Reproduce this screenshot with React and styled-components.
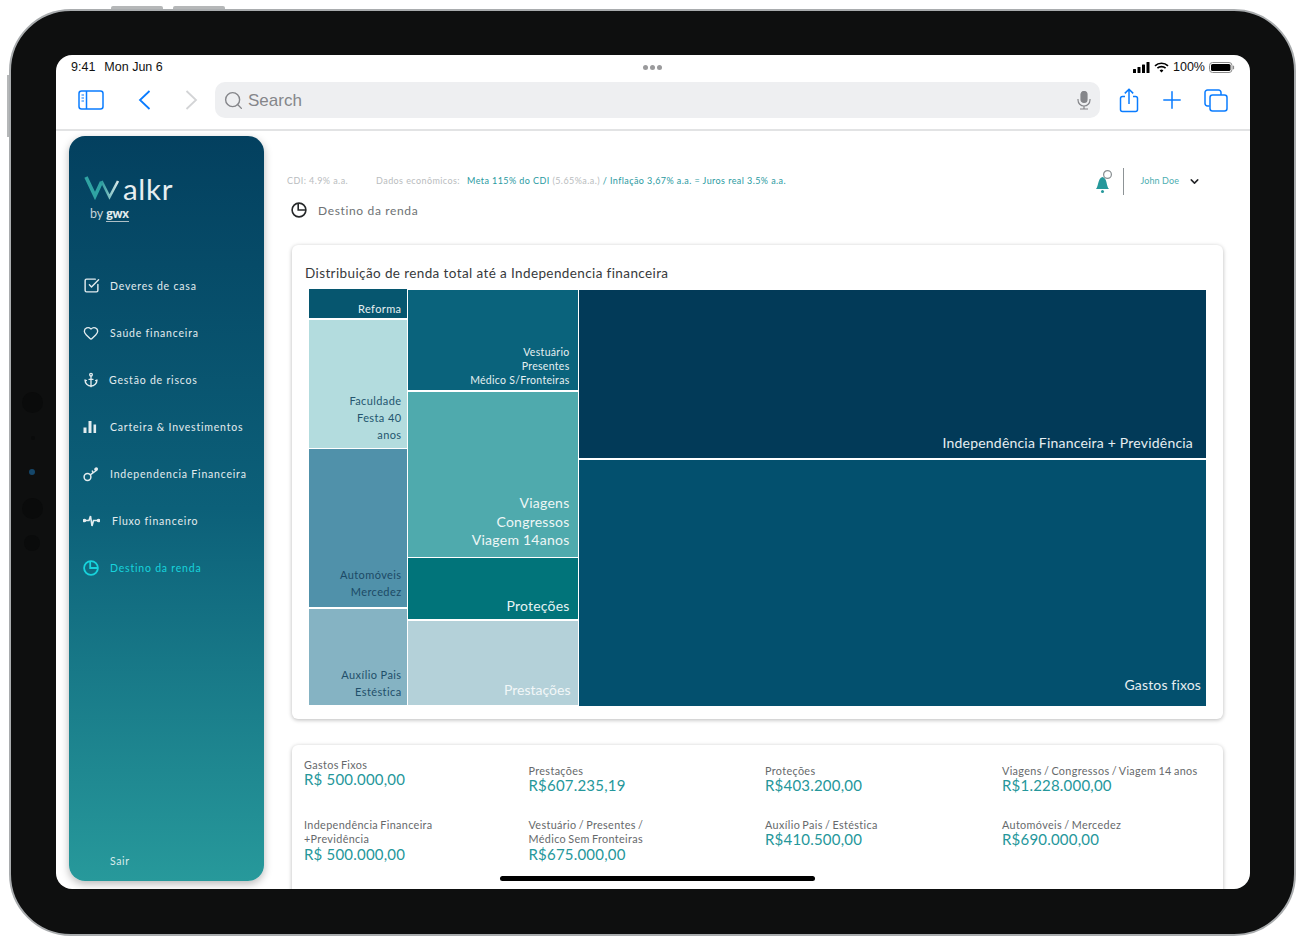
import React from "react";
import styled, { createGlobalStyle } from "styled-components";
import { Heart, Anchor, SquareCheckBig, ChevronDown, Search, Plus } from "lucide-react";

const Global = createGlobalStyle`
  html, body { margin: 0; padding: 0; background: #fff; }
  body { width: 1306px; height: 945px; overflow: hidden; font-family: Lato, "Open Sans", sans-serif; }
`;

const Device = styled.div`
  position: relative;
  box-sizing: border-box;
  width: 1287px;
  height: 927px;
  margin: 9px 0 0 9px;
  padding: 44px 44px 45px 45px;
  background: #0e0f0f;
  border-radius: 62px;
  border: 2px solid #a9acae;
`;

const SideKey = styled.span`
  position: absolute;
  top: -5px;
  left: ${(p) => p.$left}px;
  width: 52px;
  height: 3px;
  background: #b5b7b8;
  border-radius: 2px 2px 0 0;
`;

const VolumeKey = styled.span`
  position: absolute;
  left: -4px;
  top: 64px;
  width: 2px;
  height: 62px;
  background: #b5b7b8;
`;

const Lens = styled.span`
  position: absolute;
  left: ${(p) => p.$left}px;
  top: ${(p) => p.$top}px;
  width: ${(p) => p.$size}px;
  height: ${(p) => p.$size}px;
  border-radius: 50%;
  background: ${(p) => p.$color};
`;

const Screen = styled.div`
  position: relative;
  width: 1194px;
  height: 834px;
  background: #fff;
  border-radius: 16px;
  overflow: hidden;
  display: flex;
  flex-direction: column;
`;

const StatusBar = styled.div`
  height: 24px;
  flex: none;
  padding: 0 15px;
  display: flex;
  align-items: center;
  justify-content: space-between;
  font: 12.5px "Liberation Sans", Arial, sans-serif;
  color: #111;
`;

const StatusLeft = styled.div`
  display: flex;
  gap: 9px;
`;

const Dots = styled.div`
  display: flex;
  gap: 2px;
  margin-left: 10px;
  & > span { width: 5px; height: 5px; border-radius: 50%; background: #9a9a9c; }
`;

const StatusRight = styled.div`
  display: flex;
  align-items: center;
  gap: 4px;
`;

const Toolbar = styled.div`
  height: 52px;
  flex: none;
  box-sizing: border-box;
  border-bottom: 2px solid #e2e3e4;
  display: flex;
  align-items: flex-start;
  padding: 3px 0 0 22px;
`;

const ToolButton = styled.div`
  width: ${(p) => p.$w}px;
  height: 36px;
  flex: none;
  display: flex;
  align-items: center;
  color: ${(p) => p.$muted ? "#d3d4d6" : "#0a7cff"};
`;

const SearchBar = styled.div`
  width: 885px;
  height: 36px;
  flex: none;
  box-sizing: border-box;
  margin-right: 19px;
  padding: 0 9px 0 8px;
  background: #eeeff1;
  border-radius: 10px;
  display: flex;
  align-items: center;
  gap: 4px;
  color: #85868a;
  font: 17px "Liberation Sans", Arial, sans-serif;
`;

const SearchText = styled.span`
  flex: 1;
  padding-top: 1px;
`;

const Body = styled.div`
  flex: 1;
  min-height: 0;
  display: flex;
  padding: 5px 0 0 13px;
`;

const Sidebar = styled.aside`
  width: 195px;
  height: 745px;
  flex: none;
  box-sizing: border-box;
  padding: 37px 0 14px;
  display: flex;
  flex-direction: column;
  border-radius: 16px;
  background: linear-gradient(180deg, #03405f 0%, #0c6079 50%, #27999b 100%);
  box-shadow: 0 3px 9px rgba(0, 0, 0, .28);
`;

const Logo = styled.div`
  margin-left: 15px;
  height: 48px;
  color: #e6eef0;
`;

const LogoTop = styled.div`
  display: flex;
  align-items: flex-start;
  height: 30px;
  padding-top: 3px;
`;

const LogoWord = styled.span`
  font: 400 29.5px/26px Lato, sans-serif;
  letter-spacing: .7px;
  margin-left: -2px;
`;

const LogoBy = styled.div`
  margin: 1px 0 0 6px;
  font: 12.5px/14px Lato, sans-serif;
  color: #c4d3d9;
  & b { font-weight: 900; color: #e4ecee; letter-spacing: -.3px; border-bottom: 1px solid #aebfc6; }
`;

const Nav = styled.nav`
  margin-top: 41px;
  flex: 1;
  display: flex;
  flex-direction: column;
`;

const NavItem = styled.div`
  height: 47px;
  display: flex;
  align-items: center;
  gap: ${(p) => p.$gap ?? 11}px;
  padding-left: 14px;
  color: ${(p) => p.$active ? "#17d3dc" : "#e3ecef"};
  font: 400 10.5px Lato, sans-serif;
  letter-spacing: .8px;
`;

const Logout = styled.div`
  margin-left: 41px;
  color: #d8ecec;
  font: 400 10.5px Lato, sans-serif;
  letter-spacing: .6px;
`;

const Main = styled.main`
  flex: 1;
  min-width: 0;
  padding: 0 27px 0 23px;
`;

const TopInfo = styled.div`
  height: 68px;
  display: flex;
  align-items: flex-start;
  padding-top: 36px;
  box-sizing: border-box;
  font: 400 9px/18px Lato, sans-serif;
  letter-spacing: .42px;
  color: #b9bcbe;
`;

const InfoGap = styled.span`
  width: 28px;
  flex: none;
`;

const Accent = styled.span`
  color: #2a9a9f;
  margin-left: ${(p) => p.$ml ?? 0}px;
`;

const User = styled.div`
  margin-left: auto;
  display: flex;
  align-items: center;
  height: 30px;
  margin-top: -6px;
  margin-right: 22px;
`;

const Divider = styled.span`
  width: 1px;
  height: 27px;
  margin: 0 16px 0 10px;
  background: #8d9396;
`;

const UserName = styled.span`
  color: #4daeb1;
  letter-spacing: .1px;
  margin-right: 9px;
`;

const PageTitle = styled.div`
  height: 22px;
  margin: -5px 0 0 4px;
  display: flex;
  align-items: center;
  gap: 11px;
  font: 400 12px Lato, sans-serif;
  letter-spacing: .65px;
  color: #6e7274;
`;

const Card = styled.section`
  margin: ${(p) => p.$mt}px 0 0 5px;
  background: #fff;
  border-radius: 6px;
  box-shadow: 0 1px 4px rgba(0, 0, 0, .28);
`;

const ChartCard = styled(Card)`
  height: 474px;
  box-sizing: border-box;
  padding: 21px 17px 0 13px;
`;

const ChartTitle = styled.h2`
  margin: 0;
  height: 23px;
  font: 400 13.5px/15px Lato, sans-serif;
  letter-spacing: .39px;
  color: #37393b;
`;

const Treemap = styled.div`
  margin-left: 4px;
  height: 417px;
  display: flex;
  gap: 1.5px;
`;

const Column = styled.div`
  width: ${(p) => p.$w}px;
  flex: ${(p) => p.$grow ? "1" : "none"};
  display: flex;
  flex-direction: column;
  gap: 1.5px;
  padding: ${(p) => p.$top ?? 0}px 0 ${(p) => p.$bottom ?? 0}px;
`;

const Cell = styled.div`
  height: ${(p) => p.$h}px;
  flex: ${(p) => p.$grow ? "1" : "none"};
  box-sizing: border-box;
  display: flex;
  flex-direction: column;
  justify-content: flex-end;
  text-align: right;
  padding: 0 ${(p) => p.$pr ?? 5}px ${(p) => p.$pb ?? 3}px 3px;
  background: ${(p) => p.$bg};
  color: ${(p) => p.$fg};
  font-size: ${(p) => p.$fs ?? 11}px;
  line-height: ${(p) => p.$lh ?? 17.2}px;
  letter-spacing: ${(p) => p.$ls ?? .4}px;
`;

const StatsCard = styled(Card)`
  height: 160px;
  box-sizing: border-box;
  padding: 13px 0 0 12px;
  display: grid;
  grid-template-columns: 224.5px 236.5px 237px 1fr;
  grid-template-rows: 60px auto;
`;

const Stat = styled.div`
  padding-top: ${(p) => p.$pt ?? 0}px;
`;

const StatLabel = styled.div`
  font: 400 10.8px/14.4px Lato, sans-serif;
  letter-spacing: .36px;
  word-spacing: -.9px;
  color: #66696b;
`;

const StatValue = styled.div`
  font: 400 15px/14px Lato, sans-serif;
  letter-spacing: .2px;
  color: #25979b;
`;

const HomeBar = styled.div`
  position: absolute;
  left: 444px;
  bottom: 8px;
  width: 315px;
  height: 5px;
  border-radius: 3px;
  background: #000;
`;

// drawings
const WMark = () => (
  <svg width="41" height="24" viewBox="0 0 41 24" fill="none">
    <defs>
      <linearGradient id="wfade" x1="0" x2="1" y1="0" y2="0">
        <stop offset="0" stopColor="#2a9a9c" />
        <stop offset="1" stopColor="#dbe9ea" />
      </linearGradient>
    </defs>
    <path d="M2 1 L11 20 L17.5 6" stroke="#2fa3a3" strokeWidth="3.6" />
    <path d="M17.5 5 L25.5 21 L34 5" stroke="url(#wfade)" strokeWidth="2.6" />
  </svg>
);

const PieIcon = ({ size = 16, color = "currentColor", sw = 1.6 }) => (
  <svg width={size} height={size} viewBox="0 0 16 16" fill="none" stroke={color} strokeWidth={sw}>
    <circle cx="8" cy="8" r="6.9" />
    <path d="M7.2 1.2 V8 H14.8" />
  </svg>
);

const BarsIcon = () => (
  <svg width="14" height="14" viewBox="0 0 14 14" fill="currentColor">
    <rect x="0.5" y="7.5" width="3" height="5.5" />
    <rect x="5.5" y="1" width="3" height="12" />
    <rect x="10.5" y="4.5" width="2.6" height="8.5" />
  </svg>
);

const KeyIcon = () => (
  <svg width="16" height="16" viewBox="0 0 16 16" fill="none" stroke="currentColor" strokeWidth="1.5">
    <circle cx="4.5" cy="11" r="3.4" />
    <path d="M7.2 8.8 L14 4 M10 6.8 L9.2 4.6 M12.6 5 L11.8 2.6" />
    <circle cx="13.3" cy="3" r="1" fill="currentColor" />
  </svg>
);

const PulseIcon = () => (
  <svg width="17" height="14" viewBox="0 0 17 14" fill="none" stroke="currentColor" strokeWidth="1.6">
    <path d="M2 6.5 H6 L7.5 2 L9 12 L10.5 6.5 H15" />
    <circle cx="1.5" cy="6.5" r="1" fill="currentColor" />
    <circle cx="15.5" cy="6.5" r="1" fill="currentColor" />
  </svg>
);

const BellIcon = () => (
  <svg width="18" height="26" viewBox="0 0 18 26" fill="none">
    <path d="M1 21 C3.8 18 2.5 10.5 7.5 9 C12.5 10 11 18 14 21 Z" fill="#26989b" />
    <circle cx="7.5" cy="23.4" r="1.5" fill="#26989b" />
    <circle cx="12.5" cy="6.5" r="3.9" fill="#fff" stroke="#8d9396" strokeWidth="1.3" />
  </svg>
);

const SidebarToggle = () => (
  <svg width="26" height="20" viewBox="0 0 26 20" fill="none" stroke="currentColor" strokeWidth="1.5">
    <rect x="1" y="1" width="24" height="18" rx="2.5" />
    <path d="M8.5 1 V19" />
    <path d="M3.5 5 H6 M3.5 8 H6 M3.5 11 H6" strokeWidth="1.2" />
  </svg>
);

const BackIcon = ({ flip }) => (
  <svg width="13" height="20" viewBox="0 0 13 20" fill="none" stroke="currentColor" strokeWidth="1.8">
    <path d={flip ? "M1.5 1 L11 10 L1.5 19" : "M11.5 1 L2 10 L11.5 19"} />
  </svg>
);

const ShareIcon = () => (
  <svg width="20" height="25" viewBox="0 0 20 25" fill="none" stroke="currentColor" strokeWidth="1.5">
    <path d="M6 8.5 H3.5 A2 2 0 0 0 1.5 10.5 V21.5 A2 2 0 0 0 3.5 23.5 H16.5 A2 2 0 0 0 18.5 21.5 V10.5 A2 2 0 0 0 16.5 8.5 H14" />
    <path d="M10 16 V1.5 M5.8 5.4 L10 1.2 L14.2 5.4" />
  </svg>
);

const TabsIcon = () => (
  <svg width="24" height="23" viewBox="0 0 24 23" fill="none" stroke="currentColor" strokeWidth="1.5">
    <path d="M5.5 17 H3.5 A2.5 2.5 0 0 1 1 14.5 V3.5 A2.5 2.5 0 0 1 3.5 1 H14.5 A2.5 2.5 0 0 1 17 3.5 V6" />
    <rect x="6" y="6" width="17" height="16" rx="2.5" />
  </svg>
);

const MicIcon = () => (
  <svg width="14" height="19" viewBox="0 0 14 19" fill="none" stroke="#85868a" strokeWidth="1.2">
    <rect x="4" y="0.5" width="6" height="11" rx="3" fill="#85868a" />
    <path d="M1 8 V9 A6 6 0 0 0 13 9 V8 M7 15 V18 M3 18 H11" />
  </svg>
);

const SignalIcon = () => (
  <svg width="17" height="11" viewBox="0 0 17 11" fill="#000">
    <rect x="0" y="7" width="3" height="4" rx=".5" />
    <rect x="4.5" y="5" width="3" height="6" rx=".5" />
    <rect x="9" y="2.5" width="3" height="8.5" rx=".5" />
    <rect x="13.5" y="0" width="3" height="11" rx=".5" />
  </svg>
);

const WifiIcon = () => (
  <svg width="15" height="11" viewBox="0 0 15 11" fill="none" stroke="#000" strokeWidth="1.7">
    <path d="M1 3.8 A9.5 9.5 0 0 1 14 3.8" />
    <path d="M3.4 6.2 A6 6 0 0 1 11.6 6.2" />
    <path d="M7.5 10.6 L5.6 8.5 A2.8 2.8 0 0 1 9.4 8.5 Z" fill="#000" stroke="none" />
  </svg>
);

const BatteryIcon = () => (
  <svg width="26" height="11" viewBox="0 0 26 11" fill="none">
    <rect x=".5" y=".5" width="22.5" height="10" rx="3" stroke="#8a8a8a" />
    <rect x="2" y="2" width="19.5" height="7" rx="1.6" fill="#000" />
    <path d="M24.5 3.8 V7.2" stroke="#8a8a8a" strokeWidth="1.2" />
  </svg>
);

const navItems = [
  { label: "Deveres de casa", icon: <SquareCheckBig size={17} strokeWidth={2} />, gap: 10 },
  { label: "Saúde financeira", icon: <Heart size={16} strokeWidth={2} />, gap: 11 },
  { label: "Gestão de riscos", icon: <Anchor size={16} strokeWidth={2} />, gap: 10 },
  { label: "Carteira & Investimentos", icon: <BarsIcon />, gap: 13 },
  { label: "Independencia Financeira", icon: <KeyIcon />, gap: 11 },
  { label: "Fluxo financeiro", icon: <PulseIcon />, gap: 12 },
  { label: "Destino da renda", icon: <PieIcon color="#17d3dc" sw={1.8} />, gap: 11, active: true },
];

const stats = [
  { label: ["Gastos Fixos"], value: "R$ 500.000,00" },
  { label: ["Prestações"], value: "R$607.235,19", pt: 6 },
  { label: ["Proteções"], value: "R$403.200,00", pt: 6 },
  { label: ["Viagens / Congressos / Viagem 14 anos"], value: "R$1.228.000,00", pt: 6 },
  { label: ["Independência Financeira", "+Previdência"], value: "R$ 500.000,00" },
  { label: ["Vestuário / Presentes /", "Médico Sem Fronteiras"], value: "R$675.000,00" },
  { label: ["Auxílio Pais / Estéstica"], value: "R$410.500,00" },
  { label: ["Automóveis / Mercedez"], value: "R$690.000,00" },
];

const Lines = ({ items }) => items.map((t) => <div key={t}>{t}</div>);

export default function App() {
  return (
    <>
      <Global />
      <Device>
        <SideKey $left={100} />
        <SideKey $left={162} />
        <VolumeKey />
        <Lens $left={11} $top={381} $size={21} $color="#0a0b0b" />
        <Lens $left={20} $top={425} $size={4} $color="#0a0b0b" />
        <Lens $left={18} $top={458} $size={6} $color="#15476a" />
        <Lens $left={11} $top={487} $size={21} $color="#0a0b0b" />
        <Lens $left={13} $top={524} $size={16} $color="#0a0b0b" />
        <Screen>
          <StatusBar>
            <StatusLeft>
              <span>9:41</span>
              <span>Mon Jun 6</span>
            </StatusLeft>
            <Dots><span /><span /><span /></Dots>
            <StatusRight>
              <SignalIcon />
              <WifiIcon />
              <span>100%</span>
              <BatteryIcon />
            </StatusRight>
          </StatusBar>
          <Toolbar>
            <ToolButton $w={60}><SidebarToggle /></ToolButton>
            <ToolButton $w={47}><BackIcon /></ToolButton>
            <ToolButton $w={30} $muted><BackIcon flip /></ToolButton>
            <SearchBar>
              <Search size={21} strokeWidth={1.6} />
              <SearchText>Search</SearchText>
              <MicIcon />
            </SearchBar>
            <ToolButton $w={39}><ShareIcon /></ToolButton>
            <ToolButton $w={46}><Plus size={28} strokeWidth={1.3} /></ToolButton>
            <ToolButton $w={30}><TabsIcon /></ToolButton>
          </Toolbar>
          <Body>
            <Sidebar>
              <Logo>
                <LogoTop>
                  <WMark />
                  <LogoWord>alkr</LogoWord>
                </LogoTop>
                <LogoBy>by <b>gwx</b></LogoBy>
              </Logo>
              <Nav>
                {navItems.map((item) => (
                  <NavItem key={item.label} $gap={item.gap} $active={item.active}>
                    {item.icon}
                    <span>{item.label}</span>
                  </NavItem>
                ))}
              </Nav>
              <Logout>Sair</Logout>
            </Sidebar>
            <Main>
              <TopInfo>
                <span>CDI: 4.9% a.a.</span>
                <InfoGap />
                <span>Dados econômicos:</span>
                <Accent $ml={7}>Meta 115% do CDI</Accent>
                <span>&nbsp;(5.65%a.a.)&nbsp;</span>
                <Accent>/ Inflação 3,67% a.a. = Juros real 3.5% a.a.</Accent>
                <User>
                  <BellIcon />
                  <Divider />
                  <UserName>John Doe</UserName>
                  <ChevronDown size={13} strokeWidth={2.8} color="#26282a" />
                </User>
              </TopInfo>
              <PageTitle>
                <PieIcon color="#26282a" />
                <span>Destino da renda</span>
              </PageTitle>
              <ChartCard $mt={24}>
                <ChartTitle>Distribuição de renda total até a Independencia financeira</ChartTitle>
                <Treemap>
                  <Column $w={97.5} $bottom={1}>
                    <Cell $h={29} $bg="#06566f" $fg="#e6f0f2" $pb={0} $lh={18}>Reforma</Cell>
                    <Cell $h={128} $bg="#b3dcde" $fg="#24566f" $pb={4}><Lines items={["Faculdade", "Festa 40", "anos"]} /></Cell>
                    <Cell $h={158} $bg="#5091aa" $fg="#1c4a66" $pb={7}><Lines items={["Automóveis", "Mercedez"]} /></Cell>
                    <Cell $grow $bg="#85b3c3" $fg="#1f4f6a" $pb={5}><Lines items={["Auxílio Pais", "Estéstica"]} /></Cell>
                  </Column>
                  <Column $w={169.5} $top={1} $bottom={1}>
                    <Cell $h={100} $bg="#0a637c" $fg="#e6f0f2" $pr={8} $fs={10.5} $ls={.3} $lh={14} $pb={3}><Lines items={["Vestuário", "Presentes", "Médico S/Fronteiras"]} /></Cell>
                    <Cell $h={165} $bg="#4faaad" $fg="#eef6f6" $pr={8} $fs={14} $lh={18.5} $ls={.25} $pb={7}><Lines items={["Viagens", "Congressos", "Viagem 14anos"]} /></Cell>
                    <Cell $h={61} $bg="#01747a" $fg="#e6f3f3" $pr={8} $fs={14} $lh={18} $ls={.2} $pb={4}>Proteções</Cell>
                    <Cell $grow $bg="#b4d1d9" $fg="#f2f7f8" $pr={7} $fs={14} $lh={18} $ls={0} $pb={6}>Prestações</Cell>
                  </Column>
                  <Column $grow $w={628} $top={1}>
                    <Cell $h={168} $bg="#023a58" $fg="#e6eef1" $pr={13} $fs={14} $lh={18} $ls={.2} $pb={6}>Independência Financeira + Previdência</Cell>
                    <Cell $grow $bg="#03506e" $fg="#e6eef1" $pr={5} $fs={14} $lh={18} $ls={.15} $pb={12}>Gastos fixos</Cell>
                  </Column>
                </Treemap>
              </ChartCard>
              <StatsCard $mt={26}>
                {stats.map((s) => (
                  <Stat key={s.value + s.label[0]} $pt={s.pt}>
                    <StatLabel><Lines items={s.label} /></StatLabel>
                    <StatValue>{s.value}</StatValue>
                  </Stat>
                ))}
              </StatsCard>
            </Main>
          </Body>
          <HomeBar />
        </Screen>
      </Device>
    </>
  );
}
